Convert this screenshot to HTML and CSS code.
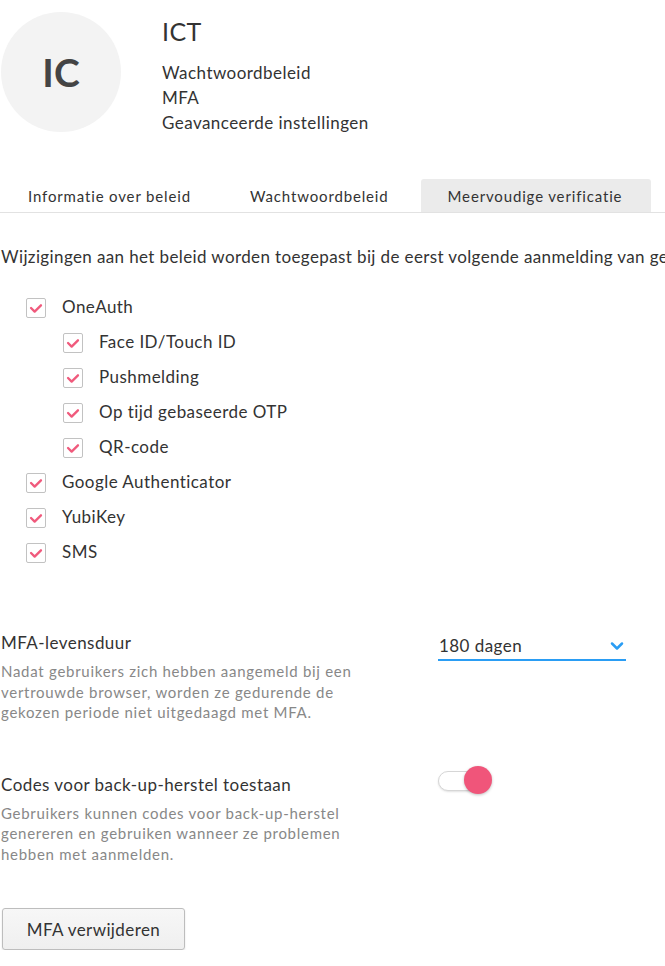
FILE: index.html
```html
<!DOCTYPE html>
<html lang="nl">
<head>
<meta charset="utf-8">
<title>ICT</title>
<link rel="stylesheet" href="styles.css">
</head>
<body>
<div class="page">
  <header class="header">
    <div class="avatar">IC</div>
    <div class="info">
      <h1 class="title">ICT</h1>
      <ul class="meta">
        <li>Wachtwoordbeleid</li>
        <li>MFA</li>
        <li>Geavanceerde instellingen</li>
      </ul>
    </div>
  </header>

  <nav class="tabs">
    <div class="tab">Informatie over beleid</div>
    <div class="tab">Wachtwoordbeleid</div>
    <div class="tab active">Meervoudige verificatie</div>
  </nav>

  <p class="notice">Wijzigingen aan het beleid worden toegepast bij de eerst volgende aanmelding van gebruikers.</p>

  <ul class="checks">
    <li class="check"><span class="box"><svg viewBox="0 0 20 20"><path d="M4.5 10 L8.5 14 L15.5 7"/></svg></span>OneAuth</li>
    <li class="check sub"><span class="box"><svg viewBox="0 0 20 20"><path d="M4.5 10 L8.5 14 L15.5 7"/></svg></span>Face ID/Touch ID</li>
    <li class="check sub"><span class="box"><svg viewBox="0 0 20 20"><path d="M4.5 10 L8.5 14 L15.5 7"/></svg></span>Pushmelding</li>
    <li class="check sub"><span class="box"><svg viewBox="0 0 20 20"><path d="M4.5 10 L8.5 14 L15.5 7"/></svg></span>Op tijd gebaseerde OTP</li>
    <li class="check sub"><span class="box"><svg viewBox="0 0 20 20"><path d="M4.5 10 L8.5 14 L15.5 7"/></svg></span>QR-code</li>
    <li class="check"><span class="box"><svg viewBox="0 0 20 20"><path d="M4.5 10 L8.5 14 L15.5 7"/></svg></span>Google Authenticator</li>
    <li class="check"><span class="box"><svg viewBox="0 0 20 20"><path d="M4.5 10 L8.5 14 L15.5 7"/></svg></span>YubiKey</li>
    <li class="check"><span class="box"><svg viewBox="0 0 20 20"><path d="M4.5 10 L8.5 14 L15.5 7"/></svg></span>SMS</li>
  </ul>

  <section class="setting first">
    <div class="setting-text">
      <div class="setting-label">MFA-levensduur</div>
      <div class="setting-desc">Nadat gebruikers zich hebben aangemeld bij een vertrouwde browser, worden ze gedurende de gekozen periode niet uitgedaagd met MFA.</div>
    </div>
    <div class="select">
      <span>180 dagen</span>
      <svg class="chev" viewBox="0 0 14 10"><path d="M2 2.5 L7 7.5 L12 2.5"/></svg>
    </div>
  </section>

  <section class="setting second">
    <div class="setting-text">
      <div class="setting-label">Codes voor back-up-herstel toestaan</div>
      <div class="setting-desc">Gebruikers kunnen codes voor back-up-herstel genereren en gebruiken wanneer ze problemen hebben met aanmelden.</div>
    </div>
    <div class="toggle"><span class="knob"></span></div>
  </section>

  <button class="btn">MFA verwijderen</button>
</div>
</body>
</html>
```

FILE: styles.css
```css
html, body {
  margin: 0;
  padding: 0;
  background: #fff;
  overflow: hidden;
}
body {
  font-family: Lato, "Open Sans", "Liberation Sans", sans-serif;
  color: #333;
  letter-spacing: 0.45px;
}
.page {
  padding: 12px 0 0 1px;
}
.header {
  display: flex;
  align-items: flex-start;
}
.avatar {
  width: 120px;
  height: 120px;
  border-radius: 50%;
  background: #f3f3f3;
  color: #444;
  font-size: 39px;
  font-weight: 700;
  letter-spacing: 0;
  display: flex;
  align-items: center;
  justify-content: center;
  flex: none;
}
.info {
  margin-left: 41px;
  padding-top: 4px;
}
.title {
  margin: 0;
  font-size: 25px;
  font-weight: 400;
  line-height: 30px;
  color: #333;
}
.meta {
  list-style: none;
  margin: 14px 0 0;
  padding: 0;
  font-size: 17px;
  line-height: 25px;
}
.tabs {
  display: flex;
  gap: 3px;
  margin-top: 44px;
  margin-left: -1px;
  border-bottom: 1px solid #e2e2e2;
  white-space: nowrap;
}
.tab {
  padding: 0 28px;
  height: 33px;
  line-height: 35px;
  font-size: 15px;
  letter-spacing: 0.85px;
  color: #333;
  border-radius: 3px 3px 0 0;
}
.tab.active {
  background: #ebebeb;
  margin-left: 1px;
  padding: 0 29px 0 27px;
}
.notice {
  margin: 32px 0 0;
  font-size: 17px;
  line-height: 24px;
  letter-spacing: 0.38px;
  white-space: nowrap;
}
.checks {
  list-style: none;
  margin: 20px 0 0;
  padding: 0;
}
.check {
  display: flex;
  align-items: center;
  height: 35px;
  padding-left: 25px;
  font-size: 17px;
}
.check.sub {
  padding-left: 62px;
}
.box {
  width: 18px;
  height: 18px;
  border: 1px solid #c2c2c2;
  border-radius: 2px;
  margin-right: 16px;
  display: flex;
  flex: none;
  margin-top: 2px;
}
.box svg {
  width: 18px;
  height: 18px;
}
.box path {
  fill: none;
  stroke: #f05a7c;
  stroke-width: 2.6;
  stroke-linecap: round;
  stroke-linejoin: round;
}
.setting {
  display: flex;
  align-items: flex-start;
}
.setting.first {
  margin-top: 62px;
}
.setting.second {
  margin-top: 50px;
}
.setting-text {
  width: 370px;
  flex: none;
}
.setting-label {
  font-size: 17px;
  line-height: 24px;
}
.setting-desc {
  margin-top: 6px;
  font-size: 15px;
  line-height: 20.5px;
  letter-spacing: 0.72px;
  color: #888;
}
.select {
  margin-left: 67px;
  width: 188px;
  height: 27px;
  border-bottom: 2px solid #2a9df4;
  display: flex;
  align-items: center;
  justify-content: space-between;
  font-size: 17px;
  color: #333;
  margin-top: 1px;
}
.select span {
  padding-left: 1px;
}
.chev {
  width: 14px;
  height: 10px;
  margin-right: 2px;
}
.chev path {
  fill: none;
  stroke: #2a9df4;
  stroke-width: 2.5;
  stroke-linecap: round;
  stroke-linejoin: round;
}
.toggle {
  margin-left: 67px;
  margin-top: -2px;
  width: 44px;
  height: 18px;
  border: 1px solid #d6d6d6;
  border-radius: 10px;
  background: #fff;
  position: relative;
  box-shadow: 0 1px 2px rgba(0,0,0,0.12);
}
.knob {
  position: absolute;
  width: 28px;
  height: 28px;
  border-radius: 50%;
  background: #f0557a;
  right: -9px;
  top: -6px;
  box-shadow: 0 1px 3px rgba(0,0,0,0.25);
}
.btn {
  display: block;
  margin-top: 44px;
  margin-left: 1px;
  width: 183px;
  height: 42px;
  border: 1px solid #bdbdbd;
  border-radius: 3px;
  background: linear-gradient(#f7f7f7, #efefef);
  box-shadow: 0 1px 2px rgba(0,0,0,0.12);
  font-family: Lato, "Open Sans", "Liberation Sans", sans-serif;
  font-size: 17px;
  color: #333;
  padding: 0;
  letter-spacing: 0.4px;
}
```
